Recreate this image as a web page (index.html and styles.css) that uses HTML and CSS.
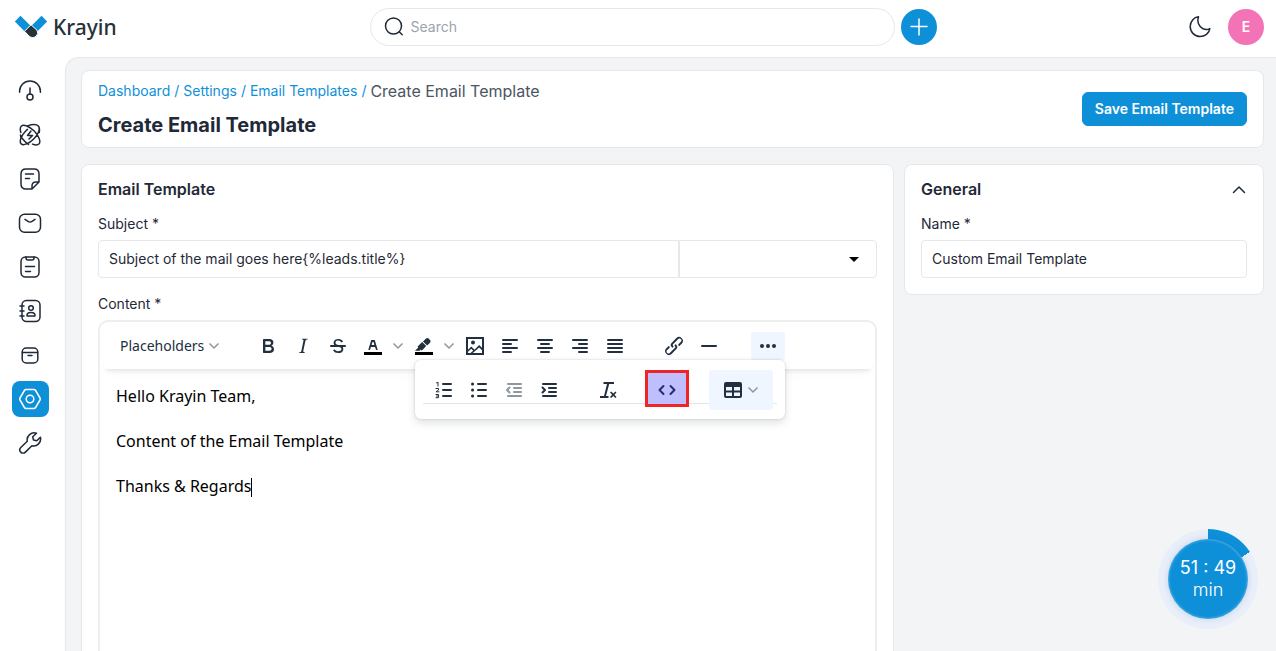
FILE: index.html
```html
<!DOCTYPE html>
<html lang="en">
<head>
<meta charset="utf-8">
<meta name="viewport" content="width=device-width, initial-scale=1">
<title>Create Email Template</title>
<link rel="stylesheet" href="styles.css">
</head>
<body>
<div class="app">
  <header class="topbar">
    <a class="logo" href="#" aria-label="Krayin">
      <svg width="34" height="26" viewBox="0 0 34 26"><path d="M.8 7.500 6.500 1.800 16.500 11.800 10.500 17.200Z" fill="#0e90d9"/><path d="M33.200 7.500 27.500 1.800 17.500 11.800 23.500 17.200Z" fill="#0e90d9"/><path d="M17 10.800 10.500 17.300 15.800 22.800A5 5 0 0 0 23 16.200Z" fill="#263238" stroke="#fff" stroke-width="1"/></svg>
      <span>Krayin</span>
    </a>
    <div class="topbar-center">
      <label class="search">
        <svg class="line" width="22" height="22" viewBox="0 0 22 22"><circle cx="10.500" cy="10" r="8"/><path d="m16.200 15.700 3 3"/></svg>
        <input type="search" placeholder="Search" aria-label="Search">
      </label>
      <button class="add" aria-label="Quick add"><svg width="20" height="20" viewBox="0 0 20 20"><path d="M10 1.500v17M1.500 9.500h17" stroke="#fff" stroke-width="1.500"/></svg></button>
    </div>
    <div class="topbar-end">
      <button class="plain" aria-label="Dark mode"><svg class="line" width="24" height="24" viewBox="0 0 24 24"><path d="M10.500 1.800C5.800 2.200 2.200 6.500 2.200 11.600c0 5.500 4.400 9.900 9.900 9.900 4.700 0 9.200-3.200 9.700-7.900-2 1.100-4.600 1.200-6.800.1-4.500-2-6.300-7.600-4.500-11.900Z"/></svg></button>
      <button class="avatar">E</button>
    </div>
  </header>

  <div class="body">
    <nav class="sidebar" aria-label="Main">
      <a href="#" aria-label="Dashboard"><svg class="line" width="24" height="24" viewBox="0 0 24 24"><path d="M1.600 13.200V12a10.400 10 0 0 1 20.800 0v1.200M12 9v6"/><circle cx="12" cy="18" r="3"/></svg></a>
      <a href="#" aria-label="Leads"><svg class="line" width="24" height="24" viewBox="0 0 24 24"><path d="M2.800 9.500C2 6.500 2 4.500 3.200 3.300c2.300-2.300 8.300 0 13 4.700s7 10.700 4.700 13c-1.300 1.300-3.700 1.100-6.400.1M9.500 2.900c5-1.700 9.500-1.500 11 .4 2 2.500-.3 8.200-4.800 12.700s-10.200 7-12.500 4.900c-2.200-2-.2-8 4.300-12.600l2-1.900M21.200 9.500c.5-2 .5-4-.5-6.200M2.800 14.500 2.500 12c1 3 4 6.500 8 9.500"/><path d="m13 8-3.500 4.500h5L11 16"/></svg></a>
      <a href="#" aria-label="Quotes"><svg class="line" width="24" height="24" viewBox="0 0 24 24"><path d="M14 22H8q-5 0-5-5V7q0-5 5-5h8q5 0 5 5v8l-7 7Zm0 0v-3q0-4 4-4h3M7.500 7h8M7.500 11.500h4"/></svg></a>
      <a href="#" aria-label="Mail"><svg class="line" width="24" height="24" viewBox="0 0 24 24"><rect x="1.500" y="3.300" width="21" height="18" rx="5"/><path d="m7 8.300 3 2q2 1.300 4 0l3-2"/></svg></a>
      <a href="#" aria-label="Activities"><svg class="line" width="24" height="24" viewBox="0 0 24 24"><rect x="3" y="2" width="18" height="20" rx="4.500"/><path d="M8 2v1q0 2 2 2h4q2 0 2-2V2M7.500 11.500h9M7.500 16.500h5"/></svg></a>
      <a href="#" aria-label="Contacts"><svg class="line" width="24" height="24" viewBox="0 0 24 24"><rect x="4" y="1.500" width="18" height="21" rx="4.500"/><path d="M2 7h4M2 12h4M2 17h4M9 17q-.5-3.500 4-3.500t4 3.500Z"/><circle cx="13" cy="9" r="2.300"/></svg></a>
      <a href="#" aria-label="Products"><svg class="line" width="24" height="24" viewBox="0 0 24 24"><rect x="4.200" y="5" width="15.600" height="15" rx="4"/><path d="M4.500 9.500h15M10 12.500h4"/></svg></a>
      <a class="active" href="#" aria-label="Settings"><svg class="line" width="24" height="24" viewBox="0 0 24 24"><path d="M8.200 2.500h7.600q1.200 0 1.800 1l4.400 7.500q.6 1 0 2l-4.400 7.500q-.6 1-1.800 1H8.200q-1.200 0-1.800-1L2 13q-.6-1 0-2l4.400-7.500q.6-1 1.800-1Z"/><circle cx="12" cy="12" r="3.800"/></svg></a>
      <a href="#" aria-label="Configuration"><svg class="line" width="24" height="24" viewBox="0 0 24 24"><path d="M18.500 2.300A7 7 0 0 0 9.300 10.300L2.800 16.500a3.200 3.200 0 0 0 4.600 4.600l6.500-6.400a7 7 0 0 0 8.500-8.500L18.800 9.800l-3.300-.8-.8-3.200Z"/></svg></a>
    </nav>

    <main class="main">
      <section class="card page-head">
        <div>
          <nav class="crumbs" aria-label="Breadcrumb"><a href="#">Dashboard</a><i>/</i><a href="#">Settings</a><i>/</i><a href="#">Email Templates</a><i>/</i><span>Create Email Template</span></nav>
          <h1>Create Email Template</h1>
        </div>
        <button class="save">Save Email Template</button>
      </section>

      <div class="columns">
        <section class="card panel template">
          <h2>Email Template</h2>
          <label class="label" for="subject">Subject *</label>
          <div class="subject-row">
            <input class="field" id="subject" type="text" value="Subject of the mail goes here{%leads.title%}">
            <span class="select-wrap"><select class="field" aria-label="Placeholders"><option></option></select></span>
          </div>
          <span class="label content-label" id="content-label">Content *</span>
          <div class="editor">
            <div class="toolbar">
              <div class="group">
                <button class="tool placeholders">Placeholders <svg class="chev" width="12" height="8" viewBox="0 0 12 8"><path d="m1.500 1.500 4.500 4.500 4.500-4.500"/></svg></button>
              </div>
              <div class="group">
                <button class="tool" aria-label="Bold"><svg class="solid" width="24" height="24" viewBox="0 0 24 24"><path fill-rule="evenodd" d="M7.800 19c-.3 0-.5 0-.6-.2l-.2-.5V5.700c0-.2 0-.4.2-.5l.6-.2h5c1.500 0 2.700.3 3.500 1 .7.600 1.100 1.400 1.100 2.500a3 3 0 0 1-.6 1.900c-.4.600-1 1-1.600 1.200.4.100.9.300 1.300.6s.8.700 1 1.200c.4.400.5 1 .5 1.600 0 1.300-.4 2.300-1.300 3-.8.700-2.100 1-3.800 1H7.800Zm5-8.300c.6 0 1.200-.1 1.600-.5.400-.3.600-.7.600-1.300 0-1.100-.8-1.700-2.300-1.700H9.300v3.500h3.400Zm.5 6c.7 0 1.300-.1 1.700-.4.400-.4.600-.9.600-1.500s-.2-1-.7-1.400c-.4-.3-1-.4-2-.4H9.400v3.800h4Z"/></svg></button>
                <button class="tool" aria-label="Italic"><svg class="solid" width="24" height="24" viewBox="0 0 24 24"><path d="m16.700 4.700-.1.900h-.3c-.6 0-1 0-1.400.3-.3.300-.4.600-.5 1.100l-2.100 9.800v.6c0 .5.400.8 1.400.8h.2l-.2.800H8l.2-.8h.2c1.100 0 1.800-.5 2-1.500l2-9.800.1-.5c0-.6-.4-.8-1.400-.8h-.3l.2-.9h5.800Z"/></svg></button>
                <button class="tool" aria-label="Strikethrough"><svg class="solid" width="24" height="24" viewBox="0 0 24 24"><path d="M15.600 8.500c-.5-.7-1-1.100-1.300-1.300-.6-.4-1.300-.6-2-.6-2.700 0-2.800 1.700-2.800 2.100 0 1.600 1.800 2 3.200 2.300 4.400.9 4.600 2.800 4.600 3.900 0 1.400-.7 4.100-5 4.100A6.200 6.200 0 0 1 7 16.400l1.500-1.100c.4.600 1.600 2 3.700 2 1.600 0 2.500-.4 3-1.200.4-.8.300-2-.8-2.600-.7-.4-1.600-.7-2.900-1-1-.2-3.900-.8-3.900-3.600C7.600 6 10.300 5 12.400 5c2.900 0 4.200 1.600 4.700 2.400l-1.500 1.100Z"/><path d="M5 11h14a1 1 0 0 1 0 2H5a1 1 0 0 1 0-2Z"/></svg></button>
                <button class="tool" aria-label="Text color"><svg class="solid" width="24" height="24" viewBox="0 0 24 24"><path fill="#000" d="M3 18h18v3H3z"/><path d="M8.700 16h-.8a.5.500 0 0 1-.5-.6l2.700-9c.1-.3.300-.4.500-.4h2.800c.2 0 .4.100.5.400l2.700 9a.5.500 0 0 1-.5.600h-.8a.5.500 0 0 1-.4-.4l-.7-2.200c0-.3-.3-.4-.5-.4h-3.400c-.2 0-.4.100-.5.400l-.7 2.200c0 .3-.2.400-.4.400Zm2.600-7.600-.6 2a.5.500 0 0 0 .5.600h1.600a.5.500 0 0 0 .5-.6l-.6-2c0-.3-.3-.4-.5-.4h-.4c-.2 0-.4.100-.5.400Z"/></svg></button><button class="tool drop" aria-label="Text color options"><svg class="chev" width="12" height="8" viewBox="0 0 12 8"><path d="m1.500 1.500 4.500 4.500 4.500-4.500"/></svg></button>
                <button class="tool" aria-label="Background color"><svg class="solid" width="24" height="24" viewBox="0 0 24 24"><path fill="#000" d="M3 18h18v3H3z"/><path d="M7.700 16.700H3l3.300-3.300-.7-.8L10.200 8l4 4.100-4 4.200c-.2.200-.6.200-.8 0l-.6-.7-1.100 1.100Zm5-7.500L11 7.400l3-2.900a2 2 0 0 1 2.600 0L18 6c.7.700.7 2 0 2.700l-2.900 2.900-1.800-1.800-.5-.6"/></svg></button><button class="tool drop" aria-label="Background color options"><svg class="chev" width="12" height="8" viewBox="0 0 12 8"><path d="m1.500 1.500 4.500 4.500 4.500-4.500"/></svg></button>
                <button class="tool" aria-label="Insert image"><svg class="solid" width="24" height="24" viewBox="0 0 24 24"><path fill-rule="evenodd" d="M3 3h18v18H3ZM5 5v10.700l3.300-3.200 3.200 3.200 4.700-4.700 2.800 2.800V5Zm0 14h2.500l2.700-2.300-2-2L5 17.800Zm4.800 0H19v-2.800l-2.800-2.800Z"/><circle cx="10" cy="8.500" r="2"/></svg></button>
                <button class="tool" aria-label="Align left"><svg class="bars" width="24" height="24" viewBox="0 0 24 24"><path d="M5 6h14M5 10h8M5 14h14M5 18h8"/></svg></button>
                <button class="tool" aria-label="Align center"><svg class="bars" width="24" height="24" viewBox="0 0 24 24"><path d="M5 6h14M8 10h8M5 14h14M8 18h8"/></svg></button>
                <button class="tool" aria-label="Align right"><svg class="bars" width="24" height="24" viewBox="0 0 24 24"><path d="M5 6h14M11 10h8M5 14h14M11 18h8"/></svg></button>
                <button class="tool" aria-label="Justify"><svg class="bars" width="24" height="24" viewBox="0 0 24 24"><path d="M5 6h14M5 10h14M5 14h14M5 18h14"/></svg></button>
              </div>
              <div class="group">
                <button class="tool" aria-label="Link"><svg class="solid" width="24" height="24" viewBox="0 0 24 24"><path d="M6.200 12.300a1 1 0 0 1 1.400 1.400l-2 2a2 2 0 1 0 2.600 2.800l4.800-4.800a1 1 0 0 0 0-1.400 1 1 0 1 1 1.400-1.300 2.900 2.900 0 0 1 0 4L9.600 20a3.900 3.900 0 0 1-5.500-5.500l2-2Zm11.600-.6a1 1 0 0 1-1.400-1.400l2-2a2 2 0 1 0-2.600-2.800L11 10.300a1 1 0 0 0 0 1.400A1 1 0 1 1 9.600 13a2.900 2.900 0 0 1 0-4L14.400 4a3.900 3.900 0 0 1 5.500 5.500l-2 2Z"/></svg></button>
                <button class="tool" aria-label="Horizontal line"><svg class="bars" width="24" height="24" viewBox="0 0 24 24"><path d="M5 12h14"/></svg></button>
              </div>
              <div class="group overflow">
                <button class="tool pressed" aria-label="More" aria-expanded="true"><svg class="solid" width="24" height="24" viewBox="0 0 24 24"><circle cx="6" cy="12" r="2"/><circle cx="12" cy="12" r="2"/><circle cx="18" cy="12" r="2"/></svg></button>
                <div class="popover">
                  <div class="group">
                    <button class="tool" aria-label="Numbered list"><svg class="bars" width="24" height="24" viewBox="0 0 24 24"><path d="M11 6h8M11 12h8M11 18h8"/><path class="thin" d="M4.500 4.800 6 4.300V8M4 10.500h2.500V12L4 13.800h3M4 16.500h2.500v3.200H4M4.500 18h2"/></svg></button>
                    <button class="tool" aria-label="Bullet list"><svg class="bars" width="24" height="24" viewBox="0 0 24 24"><path d="M11 6h8M11 12h8M11 18h8"/><path class="dots" d="M5.500 6h.1M5.500 12h.1M5.500 18h.1"/></svg></button>
                    <button class="tool" aria-label="Decrease indent" disabled><svg class="bars" width="24" height="24" viewBox="0 0 24 24"><path d="M6 6h13M12 10h7M12 14h7M6 18h13M7.500 9.500 5 12l2.500 2.500"/></svg></button>
                    <button class="tool" aria-label="Increase indent"><svg class="bars" width="24" height="24" viewBox="0 0 24 24"><path d="M6 6h13M12 10h7M12 14h7M6 18h13M5.500 9.500 8 12l-2.500 2.500"/></svg></button>
                  </div>
                  <div class="group">
                    <button class="tool" aria-label="Clear formatting"><svg class="solid" width="24" height="24" viewBox="0 0 24 24"><path d="M13.200 6 10 18H8l3-12H7.500V4H18v2ZM4 18h8.500v2H4Zm15.400 2-2.100-2.100-2.200 2.100-1.100-1.100 2.100-2.200-2.100-2.100 1.100-1.100 2.200 2.100 2.100-2.100 1.100 1.100-2.100 2.100 2.100 2.200Z"/></svg></button>
                  </div>
                  <div class="group">
                    <button class="tool source" aria-label="Source code"><svg class="bars" width="24" height="24" viewBox="0 0 24 24"><path d="m8.500 8-4 4 4 4M15.500 8l4 4-4 4"/></svg></button>
                  </div>
                  <div class="group">
                    <button class="tool table-tool" aria-label="Table"><svg class="solid" width="24" height="24" viewBox="0 0 24 24"><path fill-rule="evenodd" d="M5 4h14a2 2 0 0 1 2 2v12a2 2 0 0 1-2 2H5a2 2 0 0 1-2-2V6c0-1.100.9-2 2-2ZM5 9v3.500h6V9Zm8 0v3.500h6V9Zm-8 5.500V18h6v-3.500Zm8 0V18h6v-3.500Z"/></svg><svg class="chev" width="12" height="8" viewBox="0 0 12 8"><path d="m1.500 1.500 4.500 4.500 4.500-4.500"/></svg></button>
                  </div>
                </div>
              </div>
            </div>
            <div class="content" contenteditable="true" role="textbox" aria-labelledby="content-label">
              <p>Hello Krayin Team,</p>
              <p>Content of the Email Template</p>
              <p class="current">Thanks &amp; Regards</p>
            </div>
          </div>
        </section>

        <section class="card panel general">
          <div class="panel-head"><h2>General</h2><button class="plain" aria-label="Collapse"><svg class="line" width="16" height="16" viewBox="0 0 16 16"><path d="m2.500 11.500 5.500-5.500 5.500 5.500"/></svg></button></div>
          <label class="label" for="name">Name *</label>
          <input class="field" id="name" type="text" value="Custom Email Template">
        </section>
      </div>
    </main>
  </div>
  <div class="timer"><div class="timer-face"><span>51 : 49</span><span class="unit">min</span></div></div>
</div>
</body>
</html>
```
FILE: styles.css
```css
* { box-sizing: border-box; }
body {
  margin: 0;
  background: #fff;
  color: #1f2937;
  font: 14px/20px Inter, "Liberation Sans", sans-serif;
}
h1, h2, p { margin: 0; }
button { font: inherit; color: inherit; border: 0; padding: 0; background: none; cursor: pointer; }
svg { display: block; flex: none; }
a { color: #0e90d9; text-decoration: none; }
.line { fill: none; stroke: #1f2937; stroke-width: 1.500; stroke-linecap: round; stroke-linejoin: round; }
.app { display: flex; flex-direction: column; height: 100vh; overflow: hidden; }

.topbar { display: flex; justify-content: space-between; align-items: center; padding: 8px 12px 11px 14px; }
.logo { display: flex; align-items: center; gap: 5px; width: 104px; color: #263238; font: 500 21px/28px "Noto Sans", sans-serif; }
.topbar-center { display: flex; align-items: center; gap: 6px; }
.search { display: flex; align-items: center; gap: 6px; width: 525px; height: 38px; padding: 0 12px; border: 1px solid #e5e7eb; border-radius: 20px; }
.search input { flex: 1; min-width: 0; border: 0; padding: 0; outline: 0; background: none; font: inherit; }
.search input::placeholder { color: #9ca3af; }
.add, .avatar { display: grid; place-items: center; width: 36px; height: 36px; border-radius: 50%; background: #0e90d9; }
.topbar-end { display: flex; align-items: center; gap: 16px; }
.avatar { background: #f472b6; color: #fff; font-weight: 600; }

.body { display: flex; flex: 1; min-height: 0; }
.sidebar { display: flex; flex-direction: column; gap: 8px; width: 65px; padding: 16px 12px; flex: none; }
.sidebar a { display: grid; place-items: center; width: 37px; height: 36px; padding: 0 1px 1px 0; border-radius: 8px; flex: none; }
.sidebar .active { background: #0e90d9; }
.active .line { stroke: #fff; }
.main { flex: 1; min-width: 0; overflow: hidden; padding: 12px 12px 0 15px; background: #f3f4f6; border: solid #e5e7eb; border-width: 1px 0 0 1px; border-top-left-radius: 14px; }

.card { background: #fff; border: 1px solid #e5e7eb; border-radius: 8px; }
.page-head { display: flex; align-items: center; justify-content: space-between; padding: 8px 16px; }
.page-head > div { display: grid; gap: 8px; }
.crumbs { display: flex; align-items: center; line-height: 24px; }
.crumbs i { color: #0e90d9; font-style: normal; padding: 0 4px; }
.crumbs span { color: #4b5563; font-size: 16px; }
h1 { font-size: 20px; line-height: 28px; font-weight: 700; }
h2 { font-size: 16px; line-height: 24px; font-weight: 600; }
.save { height: 34px; padding: 0 12px; border: 1px solid #0e90d9; border-radius: 6px; background: #0e90d9; color: #fff; font-weight: 600; }
.columns { display: flex; align-items: flex-start; gap: 10px; margin-top: 16px; }
.panel { padding: 12px 16px 16px; }
.template { flex: 1; min-width: 0; }
.general { width: 360px; }
.panel-head { display: flex; justify-content: space-between; align-items: center; }
.label { display: block; margin: 13px 0 6px; }
.content-label { margin: 16px 0 6px; }
.field { display: block; width: 100%; height: 38px; padding: 0 10px 2px; border: 1px solid #e5e7eb; border-radius: 4px; background: #fff; color: #1f2937; font: inherit; appearance: none; }
.subject-row { display: flex; }
.subject-row > .field { flex: 1; min-width: 0; border-radius: 4px 0 0 4px; }
.select-wrap { position: relative; width: 198px; }
.select-wrap .field { border-radius: 0 4px 4px 0; }
.select-wrap::after { content: ""; position: absolute; right: 18px; top: 17px; border: 5px solid transparent; border-top-color: #000; border-bottom: 0; pointer-events: none; }

.editor { border: 2px solid #eee; border-radius: 10px; }
.toolbar { position: relative; z-index: 2; display: flex; gap: 25px; padding: 10px 12px 9px; margin: 0 3px 0 0; color: #222f3e; }
.toolbar::after { content: ""; position: absolute; left: 4px; right: 0; bottom: 0; height: 10px; box-shadow: 0 3px 5px -2px rgba(34, 47, 62, .16), 0 8px 8px -4px rgba(34, 47, 62, .07); pointer-events: none; }
.group { display: flex; gap: 1px; }
.tool { display: grid; place-items: center; width: 34px; height: 28px; border-radius: 3px; }
.drop { width: 16px; margin-left: -1px; }
.placeholders { display: flex; align-items: center; justify-content: space-between; width: 114px; padding: 0 6px 0 8px; font: 14px/20px "Noto Sans", "Open Sans", sans-serif; }
.solid { fill: #222f3e; }
.bars { fill: none; stroke: #222f3e; stroke-width: 2; stroke-linecap: round; stroke-linejoin: round; }
.bars .thin { stroke-width: 1; }
.bars .dots { stroke-width: 3; }
.chev { fill: none; stroke: #8f959d; stroke-width: 1.500; }
.tool:disabled { opacity: .5; }
.pressed, .table-tool { background: #f0f6ff; }
.overflow { position: relative; z-index: 1; }
.popover { position: absolute; right: 0; top: 100%; display: flex; gap: 25px; padding: 10px 12px 9px; border-radius: 6px; background: #fff; box-shadow: 0 0 2px rgba(34, 47, 62, .25), 0 4px 8px rgba(34, 47, 62, .14); }
.popover::before { content: ""; position: absolute; left: 8px; right: 8px; bottom: 15px; height: 1px; background: #e3e5e7; }
.popover .tool { position: relative; height: 40px; }
.popover .table-tool { display: flex; align-items: center; justify-content: center; gap: 2px; width: 64px; padding-right: 2px; }
.popover .source::before { content: ""; position: absolute; inset: 0 -5px 3px; background: #bfbfff; border: 3px solid #ef2424; }
.source svg { position: relative; }
.source .bars { stroke: #222f6e; }
.content { min-height: 360px; padding: 15px 16px; outline: 0; color: #000; font: 16px/24px "Noto Sans", "Open Sans", sans-serif; }
.content p + p { margin-top: 21px; }
.current::after { content: ""; display: inline-block; width: 1px; height: 19px; background: #000; vertical-align: middle; }

.timer { position: fixed; right: 18px; bottom: 22px; display: grid; place-items: center; width: 100px; height: 100px; border-radius: 50%; background: conic-gradient(#0e90d9 0 57deg, #e9eff9 57deg); }
.timer-face { display: flex; flex-direction: column; align-items: center; justify-content: center; width: 80px; height: 80px; border-radius: 50%; background: #0e90d9; color: #fff; font-size: 18px; line-height: 22px; box-shadow: 0 0 6px rgba(40, 90, 180, .2), inset 0 0 3px rgba(255, 255, 255, .5); }
.unit { font-weight: 300; }
```
